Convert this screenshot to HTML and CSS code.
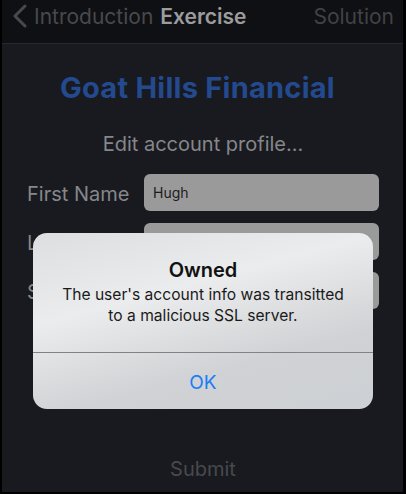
FILE: index.html
```html
<!DOCTYPE html>
<html lang="en">
<head>
  <meta charset="UTF-8">
  <meta name="viewport" content="width=device-width, initial-scale=1.0">
  <title>Goat Hills Financial - Exercise</title>
  <link rel="stylesheet" href="styles.css">
</head>
<body>

<div class="screen">

  <!-- Nav Bar -->
  <div class="navbar">
    <a class="back" href="#">
      <svg class="chevron" width="16" height="24" viewBox="0 0 16 24">
        <path d="M13 2 L3 12 L13 22" fill="none" stroke="currentColor" stroke-width="3" stroke-linecap="round" stroke-linejoin="round"/>
      </svg>
      Introduction
    </a>
    <span class="nav-title">Exercise</span>
    <a class="nav-right" href="#">Solution</a>
  </div>

  <!-- Main Content -->
  <div class="content">
    <h1 class="brand">Goat Hills Financial</h1>
    <p class="subtitle">Edit account profile...</p>

    <div class="form-row">
      <label>First Name</label>
      <div class="field">Hugh</div>
    </div>
    <div class="form-row">
      <label>Last Name</label>
      <div class="field"></div>
    </div>
    <div class="form-row">
      <label>SSN</label>
      <div class="field"></div>
    </div>

    <div class="submit">Submit</div>
  </div>

  <!-- Alert -->
  <div class="overlay">
    <div class="alert">
      <div class="alert-body">
        <h2>Owned</h2>
        <p>The user's account info was transitted to a malicious SSL server.</p>
      </div>
      <div class="alert-btn">OK</div>
    </div>
  </div>

</div>

</body>
</html>
```

FILE: styles.css
```css
/* Base */
* {
  margin: 0;
  padding: 0;
  box-sizing: border-box;
  font-family: Inter, "Noto Sans", sans-serif;
}

body {
  width: 406px;
  height: 494px;
  background: #000;
  padding: 0 3px 2px 2px;
}

.screen {
  position: relative;
  height: 492px;
  background: #181a1f;
  display: flex;
  flex-direction: column;
  overflow: hidden;
}

/* Nav Bar */
.navbar {
  height: 44px;
  background: #0f1013;
  border-bottom: 1px solid #26282d;
  display: flex;
  align-items: center;
  padding: 0 9px 11px 10px;
  font-size: 21px;
}

.back {
  display: flex;
  align-items: center;
  color: #48494c;
  text-decoration: none;
  gap: 6px;
}

.nav-title {
  color: #9c9c9e;
  font-weight: 600;
  margin-left: 7px;
}

.nav-right {
  margin-left: auto;
  color: #414245;
  text-decoration: none;
}

/* Content */
.content {
  flex: 1;
  display: flex;
  flex-direction: column;
  padding: 0 24px 0 25px;
}

.brand {
  font-size: 29px;
  font-weight: 700;
  color: #234a8e;
  text-align: center;
  margin-top: 26px;
  padding-right: 11px;
  letter-spacing: 0.25px;
}

.subtitle {
  font-size: 20px;
  color: #86878a;
  text-align: center;
  margin-top: 27px;
  margin-bottom: 18px;
}

.form-row {
  display: flex;
  align-items: center;
  height: 37px;
  margin-bottom: 12px;
}

.form-row label {
  width: 117px;
  font-size: 20px;
  color: #86878a;
  padding-top: 2px;
}

.field {
  flex: 1;
  height: 37px;
  background: #9a9a9b;
  border-radius: 6px;
  font-size: 14px;
  color: #1c1c1e;
  padding: 0 9px;
  display: flex;
  align-items: center;
}

.submit {
  margin-top: auto;
  margin-bottom: 11px;
  text-align: center;
  font-size: 20px;
  color: #48494c;
}

/* Alert */
.overlay {
  position: absolute;
  top: 233px;
  left: 31px;
}

.alert {
  width: 340px;
  height: 176px;
  border-radius: 14px;
  background: linear-gradient(165deg, #dcdee0 0%, #ebeced 35%, #d0d2d5 70%, #cdd0d4 100%);
  display: flex;
  flex-direction: column;
  overflow: hidden;
}

.alert-body {
  height: 120px;
  padding: 25px 22px 0;
  text-align: center;
  border-bottom: 1px solid #7f8389;
}

.alert-body h2 {
  font-size: 20px;
  font-weight: 600;
  color: #111;
  margin-bottom: 2px;
}

.alert-body p {
  font-size: 15.6px;
  line-height: 21px;
  color: #1a1a1a;
}

.alert-btn {
  flex: 1;
  display: flex;
  align-items: center;
  justify-content: center;
  font-size: 19px;
  color: #1a7ef6;
  padding-top: 3px;
}
```
